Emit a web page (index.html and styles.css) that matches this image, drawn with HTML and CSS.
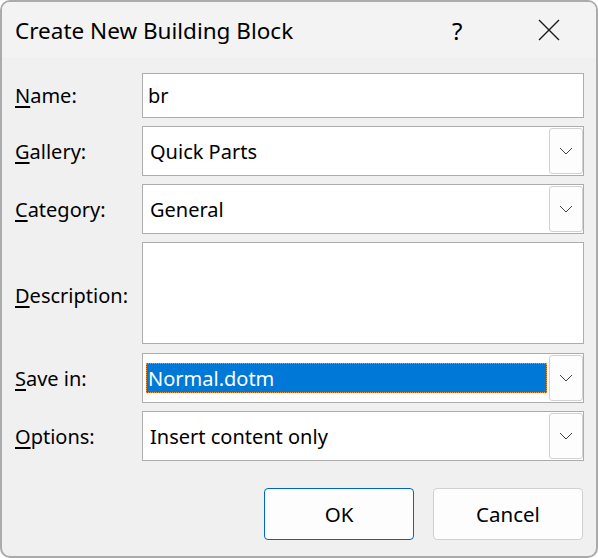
FILE: index.html
```html
<!DOCTYPE html>
<html lang="en">

<head>
  <meta charset="UTF-8">
  <title>Create New Building Block</title>
  <link rel="stylesheet" href="styles.css">
</head>

<body>
  <div class="dialog">
    <div class="titlebar">
      <span class="title">Create New Building Block</span>
      <span class="help">?</span>
      <span class="close">
        <svg width="22" height="22" viewBox="0 0 22 22">
          <path d="M1 1 L21 21 M21 1 L1 21" stroke="#1a1a1a" stroke-width="1.4" fill="none" />
        </svg>
      </span>
    </div>

    <div class="form">
      <label class="label"><u>N</u>ame:</label>
      <div class="field name-field"><span class="value">br</span></div>

      <label class="label"><u>G</u>allery:</label>
      <div class="field combo">
        <span class="value">Quick Parts</span>
        <span class="drop"><svg width="14" height="8" viewBox="0 0 14 8"><path d="M1 1 L7 7 L13 1" stroke="#444" stroke-width="1" fill="none" /></svg></span>
      </div>

      <label class="label"><u>C</u>ategory:</label>
      <div class="field combo">
        <span class="value">General</span>
        <span class="drop"><svg width="14" height="8" viewBox="0 0 14 8"><path d="M1 1 L7 7 L13 1" stroke="#444" stroke-width="1" fill="none" /></svg></span>
      </div>

      <label class="label desc-label"><u>D</u>escription:</label>
      <div class="field desc-field"></div>

      <label class="label save-label"><u>S</u>ave in:</label>
      <div class="field combo save-field">
        <span class="selected">Normal.dotm</span>
        <span class="drop"><svg width="14" height="8" viewBox="0 0 14 8"><path d="M1 1 L7 7 L13 1" stroke="#444" stroke-width="1" fill="none" /></svg></span>
      </div>

      <label class="label"><u>O</u>ptions:</label>
      <div class="field combo">
        <span class="value">Insert content only</span>
        <span class="drop"><svg width="14" height="8" viewBox="0 0 14 8"><path d="M1 1 L7 7 L13 1" stroke="#444" stroke-width="1" fill="none" /></svg></span>
      </div>
    </div>

    <div class="buttons">
      <button class="btn btn-default">OK</button>
      <button class="btn">Cancel</button>
    </div>
  </div>
</body>

</html>
```

FILE: styles.css
```css
body {
  margin: 0;
  background: #fff;
  font-family: 'Noto Sans', sans-serif;
  color: #000;
}

.dialog {
  width: 598px;
  height: 558px;
  box-sizing: border-box;
  border: 2px solid #ababab;
  border-radius: 10px;
  background: #f0f0f0;
  overflow: hidden;
}

.titlebar {
  height: 56px;
  background: #f3f3f3;
  display: flex;
  align-items: center;
  padding-left: 13px;
}

.title {
  font-size: 22.5px;
  flex: 1;
}

.help {
  font-size: 24px;
  width: 20px;
  margin-right: 66px;
}

.close {
  display: flex;
  margin-right: 36px;
}

.form {
  display: grid;
  grid-template-columns: 127px 442px;
  row-gap: 8px;
  padding: 15px 0 0 13px;
}

.label {
  font-size: 20px;
  display: flex;
  align-items: center;
}

.desc-label {
  padding-top: 4px;
}

.label u {
  text-decoration-thickness: 2px;
  text-underline-offset: 3px;
}

.field {
  box-sizing: border-box;
  border: 1px solid #adadad;
  background: #fff;
  height: 50px;
  display: flex;
  align-items: center;
  font-size: 20px;
  position: relative;
}

.value {
  padding-left: 7px;
}

.name-field {
  height: 45px;
}

.name-field .value {
  padding-left: 5px;
}

.desc-field {
  height: 102px;
}

.save-label,
.save-field {
  margin-top: 1px;
}

.combo .value {
  flex: 1;
}

.drop {
  width: 34px;
  align-self: stretch;
  margin: 1px 0 1px auto;
  box-sizing: border-box;
  border: 1px solid #d2d2d2;
  border-radius: 3px;
  background: #fdfdfd;
  display: flex;
  align-items: center;
  justify-content: center;
}

.selected {
  flex: 1;
  height: 30px;
  margin: 0 2px 0 3px;
  background: #0078d7;
  color: #fff;
  outline: 1px dotted #f0953c;
  outline-offset: -1px;
  display: flex;
  align-items: center;
  padding-left: 2px;
}

.buttons {
  display: flex;
  justify-content: flex-end;
  gap: 19px;
  padding: 27px 13px 0 0;
}

.btn {
  width: 150px;
  height: 52px;
  font-family: 'Noto Sans', sans-serif;
  font-size: 20.5px;
  color: #000;
  background: #fdfdfd;
  border: 1px solid #d0d0d0;
  border-radius: 4px;
}

.btn-default {
  border-color: #0067c0;
}
```
